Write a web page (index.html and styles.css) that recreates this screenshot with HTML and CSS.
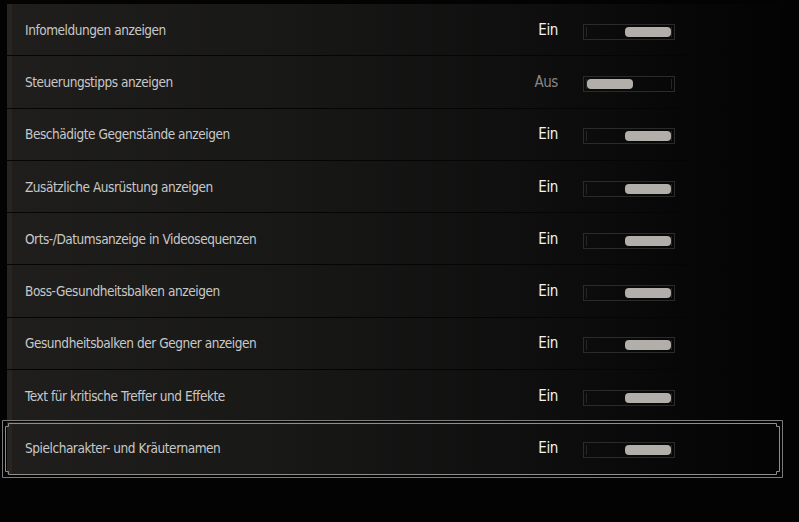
FILE: index.html
```html
<!DOCTYPE html>
<html>
<head>
    <title>Optionen</title>
    <link rel="stylesheet" href="styles.css">
</head>
<body>
    <div class="panel">
        <div class="row">
            <span class="label">Infomeldungen anzeigen</span>
            <span class="value on">Ein</span>
            <div class="toggle on"><div class="track"><div class="knob"></div></div></div>
        </div>
        <div class="row">
            <span class="label">Steuerungstipps anzeigen</span>
            <span class="value off">Aus</span>
            <div class="toggle off"><div class="track"><div class="knob"></div></div></div>
        </div>
        <div class="row">
            <span class="label">Beschädigte Gegenstände anzeigen</span>
            <span class="value on">Ein</span>
            <div class="toggle on"><div class="track"><div class="knob"></div></div></div>
        </div>
        <div class="row">
            <span class="label">Zusätzliche Ausrüstung anzeigen</span>
            <span class="value on">Ein</span>
            <div class="toggle on"><div class="track"><div class="knob"></div></div></div>
        </div>
        <div class="row">
            <span class="label">Orts-/Datumsanzeige in Videosequenzen</span>
            <span class="value on">Ein</span>
            <div class="toggle on"><div class="track"><div class="knob"></div></div></div>
        </div>
        <div class="row">
            <span class="label">Boss-Gesundheitsbalken anzeigen</span>
            <span class="value on">Ein</span>
            <div class="toggle on"><div class="track"><div class="knob"></div></div></div>
        </div>
        <div class="row">
            <span class="label">Gesundheitsbalken der Gegner anzeigen</span>
            <span class="value on">Ein</span>
            <div class="toggle on"><div class="track"><div class="knob"></div></div></div>
        </div>
        <div class="row">
            <span class="label">Text für kritische Treffer und Effekte</span>
            <span class="value on">Ein</span>
            <div class="toggle on"><div class="track"><div class="knob"></div></div></div>
        </div>
        <div class="row selected">
            <span class="label">Spielcharakter- und Kräuternamen</span>
            <span class="value on">Ein</span>
            <div class="toggle on"><div class="track"><div class="knob"></div></div></div>
            <svg class="frame" width="782" height="58" viewBox="0 0 782 58">
                <path d="M0.5 0.5 H780.5 V57.5 H0.5 Z" fill="none" stroke="#7c7c7c"/>
                <path d="M6.5 3.5 H774.5 V6.5 H777.5 V51.5 H774.5 V54.5 H6.5 V51.5 H3.5 V6.5 H6.5 Z" fill="none" stroke="#8e8e8e"/>
            </svg>
        </div>
    </div>
</body>
</html>
```

FILE: styles.css
```css
body { margin: 0; background: #030303; font-family: "Liberation Sans Narrow", "DejaVu Sans Condensed", sans-serif; width: 799px; height: 522px; overflow: hidden; }
.panel { margin: 4px 0 0 7px; width: 773px; }
.row { position: relative; display: flex; align-items: center; height: 51.3px; border-bottom: 1px solid #050505; padding-left: 18px; box-sizing: content-box;
       background: linear-gradient(to right, #2a2421 0, #2a2421 5px, #1f1e1d 5px, #181817 35%, #0e0e0e 70%, #060606 90%, #040404 100%); }
.label { flex: 1; font-size: 13.5px; letter-spacing: -0.45px; color: #c8c8c8; }
.value { width: 60px; text-align: right; font-size: 15px; letter-spacing: -0.4px; margin-right: -1px; }
.value.on { color: #f2f2f2; }
.value.off { color: #858585; }
.toggle { width: 92px; height: 16px; margin: 4px 0 0 26px; border: 1px solid #2b2b2b; padding: 2px; box-sizing: border-box; margin-right: 105px; }
.track { height: 10px; border: 1px solid #262626; border-width: 0 1px; position: relative; }
.knob { position: absolute; top: 0; width: 46px; height: 10px; border-radius: 4px; background: #b2aeaa; }
.toggle.on .knob { right: 0; }
.toggle.off .knob { left: 0; }
.selected .frame { position: absolute; left: -5px; top: -2px; }
```
